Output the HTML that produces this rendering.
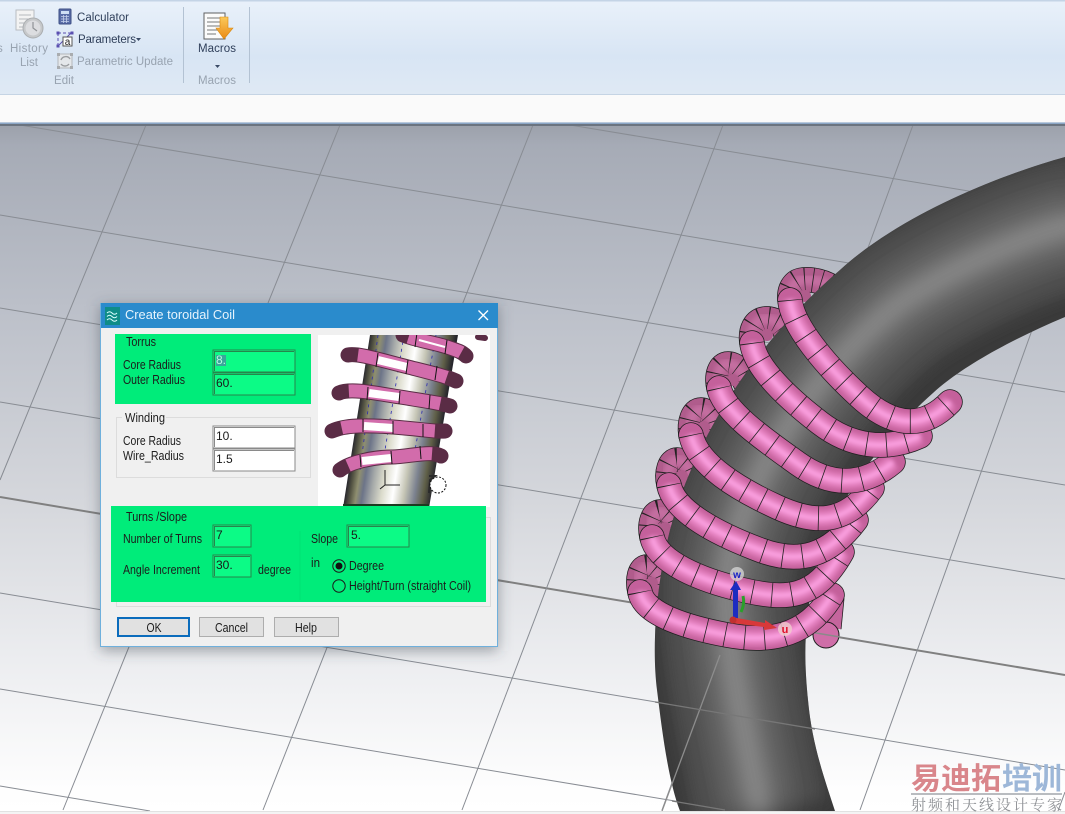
<!DOCTYPE html>
<html><head><meta charset="utf-8"><style>
html,body{margin:0;padding:0;background:#fff;width:1065px;height:814px;overflow:hidden}
svg{display:block;font-family:"Liberation Sans","Noto Sans CJK SC",sans-serif}
.g line{stroke:#888c93;stroke-width:1}
.o{fill:none;stroke:#1c1c1c;stroke-width:25.5;stroke-linecap:round}
.b{fill:none;stroke:#c4609b;stroke-width:24;stroke-linecap:round}
.m{fill:none;stroke:#e07cba;stroke-width:16;filter:url(#b2)}
.h{fill:none;stroke:#ffa6e6;stroke-width:5;filter:url(#b2)}
.d{fill:none;stroke:#222;stroke-width:24.5;stroke-dasharray:.8 19}
.bk{fill:none;stroke:#b05c8c;stroke-width:24;stroke-linecap:round}
.bm{fill:none;stroke:#c46ea0;stroke-width:10;filter:url(#b2)}
.bd{fill:none;stroke:#222;stroke-width:24;stroke-dasharray:.8 7.5}
.t{font-size:12.5px;fill:#1c1c1c}
.r{font-size:11.5px;fill:#2f3f5a}
.rg{font-size:11.5px;fill:#98a3b0}
.ig{fill:#0cfb86;stroke:#26864c;stroke-width:1}
.iw{fill:#fff;stroke:#8a8a8a;stroke-width:1}
.ri{fill:none;stroke:#1a1a1a;stroke-width:1}
.p1{fill:none;stroke:#5a2c45;stroke-width:15;stroke-linecap:round}
.p2{fill:none;stroke:#d26cab;stroke-width:13;stroke-dasharray:0 9 82 100}
.p3{fill:none;stroke:#fff;stroke-width:8}
</style></head><body>
<svg width="1065" height="814" viewBox="0 0 1065 814" xmlns="http://www.w3.org/2000/svg">
<defs>
<linearGradient id="bg" x1="0" y1="125" x2="0" y2="811" gradientUnits="userSpaceOnUse">
<stop offset="0" stop-color="#9ca1ab"/><stop offset=".03" stop-color="#a6abb6"/><stop offset=".28" stop-color="#bdc1ca"/><stop offset=".55" stop-color="#d5d7dc"/><stop offset=".77" stop-color="#ebecef"/><stop offset=".97" stop-color="#fefefe"/><stop offset="1" stop-color="#fff"/>
</linearGradient>
<linearGradient id="rib" x1="0" y1="0" x2="0" y2="94" gradientUnits="userSpaceOnUse">
<stop offset="0" stop-color="#e9f1fa"/><stop offset=".6" stop-color="#d8e5f4"/><stop offset="1" stop-color="#dfe9f4"/>
</linearGradient>
<linearGradient id="cyl" x1="343" y1="508" x2="428" y2="521" gradientUnits="userSpaceOnUse">
<stop offset="0" stop-color="#26262c"/><stop offset=".06" stop-color="#555544"/><stop offset=".13" stop-color="#8f8f70"/><stop offset=".2" stop-color="#6c7488"/><stop offset=".3" stop-color="#a4a8a8"/><stop offset=".42" stop-color="#dcdccc"/><stop offset=".55" stop-color="#ffffff"/><stop offset=".68" stop-color="#c4c4b4"/><stop offset=".8" stop-color="#7c8290"/><stop offset=".9" stop-color="#606048"/><stop offset="1" stop-color="#26262c"/>
</linearGradient>
<linearGradient id="arrow" x1="0" y1="0" x2="0" y2="1"><stop offset="0" stop-color="#fbc95a"/><stop offset="1" stop-color="#ea8a16"/></linearGradient>
<filter id="b2" x="-20%" y="-20%" width="140%" height="140%"><feGaussianBlur stdDeviation="2.4"/></filter>
<filter id="b5" x="-30%" y="-30%" width="160%" height="160%"><feGaussianBlur stdDeviation="9"/></filter>
<filter id="b8" x="-30%" y="-30%" width="160%" height="160%"><feGaussianBlur stdDeviation="7"/></filter>
<filter id="b14" x="-30%" y="-30%" width="160%" height="160%"><feGaussianBlur stdDeviation="13"/></filter>
<clipPath id="tc"><path d="M1065,157 C1000,175 900,215 840,270 C770,330 700,420 670,530 C655,590 652,650 657,690 C662,730 668,780 680,811 L835,811 C825,780 812,745 808,700 C803,650 805,620 815,570 C830,510 880,440 933,393 C960,368 1010,340 1065,317 Z"/></clipPath>
<clipPath id="ic"><rect x="318" y="335" width="172" height="172"/></clipPath>
<path id="t1" d="M790,300 C792,325 825,365 860,397 S925,428 950,402"/>
<path id="t2" d="M752,343 C755,368 790,400 820,423 S885,452 920,436"/>
<path id="t3" d="M719,388 C724,412 765,440 797,463 S862,488 893,462"/>
<path id="t4" d="M691,435 C697,465 740,490 777,507 S845,525 872,488"/>
<path id="t5" d="M669,485 C674,512 720,535 760,550 S830,555 856,520"/>
<path id="t6" d="M652,537 C657,562 700,580 743,590 S815,600 842,552"/>
<path id="t7" d="M640,592 C644,615 690,628 727,635 S805,640 832,595"/>
<path id="k1" d="M836,290 C826,281 810,279 803,280 C793,281 789,290 790,300"/>
<path id="k2" d="M786,335 C785,322 770,318 765,319 C755,320 750,330 752,343"/>
<path id="k3" d="M745,382 C745,372 735,364 728,364 C720,364 716,375 719,388"/>
<path id="k4" d="M715,430 C715,418 707,410 701,410 C693,410 689,422 691,435"/>
<path id="k5" d="M691,478 C691,468 683,460 677,460 C670,460 666,472 669,485"/>
<path id="k6" d="M673,530 C673,520 665,512 660,512 C653,512 649,524 652,537"/>
<path id="k7" d="M661,585 C661,575 653,567 647,567 C640,567 637,579 640,592"/>
</defs>

<!-- viewport background -->
<rect x="0" y="125" width="1065" height="686" fill="url(#bg)"/>
<g class="g">
<line x1="20" y1="125" x2="1065" y2="299"/>
<line x1="570" y1="125" x2="1065" y2="207"/>
<line x1="0" y1="215" x2="1065" y2="392"/>
<line x1="0" y1="308" x2="1065" y2="485"/>
<line x1="0" y1="402" x2="1065" y2="579"/>
<line x1="0" y1="497" x2="1065" y2="675" style="stroke-width:2;stroke:#808080"/>
<line x1="0" y1="593" x2="1065" y2="770"/>
<line x1="0" y1="689" x2="735" y2="811"/>
<line x1="0" y1="786" x2="150" y2="811"/>
<line x1="146" y1="125" x2="0" y2="480"/>
<line x1="340" y1="125" x2="63" y2="810"/>
<line x1="533" y1="125" x2="263" y2="810"/>
<line x1="723" y1="125" x2="462" y2="810"/>
<line x1="913" y1="125" x2="662" y2="810"/>
<line x1="1065" y1="238" x2="860" y2="810"/>
<line x1="1065" y1="792" x2="1058" y2="811"/>
</g>

<!-- back loops -->
<g>
<use href="#k7" class="o"/><use href="#k7" class="bk"/><use href="#k7" class="bm"/><use href="#k7" class="bd"/>
<use href="#k6" class="o"/><use href="#k6" class="bk"/><use href="#k6" class="bm"/><use href="#k6" class="bd"/>
<use href="#k5" class="o"/><use href="#k5" class="bk"/><use href="#k5" class="bm"/><use href="#k5" class="bd"/>
<use href="#k4" class="o"/><use href="#k4" class="bk"/><use href="#k4" class="bm"/><use href="#k4" class="bd"/>
<use href="#k3" class="o"/><use href="#k3" class="bk"/><use href="#k3" class="bm"/><use href="#k3" class="bd"/>
<use href="#k2" class="o"/><use href="#k2" class="bk"/><use href="#k2" class="bm"/><use href="#k2" class="bd"/>
<use href="#k1" class="o"/><use href="#k1" class="bk"/><use href="#k1" class="bm"/><use href="#k1" class="bd"/>
<g fill="#b05c8c">
<circle cx="805" cy="296" r="6"/><circle cx="767" cy="335" r="6"/><circle cx="733" cy="380" r="6"/><circle cx="704" cy="427" r="6"/><circle cx="682" cy="476" r="6"/><circle cx="665" cy="528" r="6"/><circle cx="652" cy="583" r="6"/>
</g>
</g>

<!-- tube -->
<g clip-path="url(#tc)">
<rect x="640" y="150" width="425" height="661" fill="#3a3a3a"/>
<path d="M1085,222 C1030,232 950,270 900,303 C820,365 745,470 728,570 C722,640 745,730 760,811" fill="none" stroke="#484848" stroke-width="135" filter="url(#b8)"/>
<path d="M1085,222 C1030,232 950,270 900,303 C820,365 745,470 728,570 C722,640 745,730 760,811" fill="none" stroke="#5c5c5c" stroke-width="88" filter="url(#b14)"/>
<path d="M1085,222 C1030,232 950,270 900,303 C820,365 745,470 728,570 C722,640 745,730 760,811" fill="none" stroke="#737373" stroke-width="42" filter="url(#b14)"/>
<path d="M1085,222 C1030,232 950,270 900,303 C820,365 745,470 728,570 C722,640 745,730 760,811" fill="none" stroke="#8e8e8e" stroke-width="14" filter="url(#b5)"/>
</g>
<g stroke="#8d8d8d" stroke-width="1.3" fill="none">
<line x1="720" y1="655" x2="662" y2="811"/>
<line x1="655" y1="702" x2="815" y2="729" stroke="#777"/>
<line x1="672" y1="801" x2="725" y2="810" stroke="#777"/>
</g>

<!-- coil -->
<path d="M832,597 L829,628" fill="none" stroke="#1c1c1c" stroke-width="25"/>
<path d="M832,597 L829,628" fill="none" stroke="#c5659d" stroke-width="23.5"/>
<circle cx="826" cy="635" r="13" fill="#cf6ea8" stroke="#1c1c1c"/>
<line x1="810" y1="632" x2="840" y2="637" stroke="#8a8a8a" stroke-width="1.5"/>
<g><use href="#t7" class="o"/><use href="#t7" class="b"/><use href="#t7" class="m"/><use href="#t7" class="h"/><use href="#t7" class="d"/></g>
<g><use href="#t6" class="o"/><use href="#t6" class="b"/><use href="#t6" class="m"/><use href="#t6" class="h"/><use href="#t6" class="d"/></g>
<g><use href="#t5" class="o"/><use href="#t5" class="b"/><use href="#t5" class="m"/><use href="#t5" class="h"/><use href="#t5" class="d"/></g>
<g><use href="#t4" class="o"/><use href="#t4" class="b"/><use href="#t4" class="m"/><use href="#t4" class="h"/><use href="#t4" class="d"/></g>
<g><use href="#t3" class="o"/><use href="#t3" class="b"/><use href="#t3" class="m"/><use href="#t3" class="h"/><use href="#t3" class="d"/></g>
<g><use href="#t2" class="o"/><use href="#t2" class="b"/><use href="#t2" class="m"/><use href="#t2" class="h"/><use href="#t2" class="d"/></g>
<g><use href="#t1" class="o"/><use href="#t1" class="b"/><use href="#t1" class="m"/><use href="#t1" class="h"/><use href="#t1" class="d"/></g>

<!-- gizmo -->
<circle cx="737" cy="574" r="7" fill="#d8d8d8" fill-opacity=".75"/>
<text x="737" y="578" font-size="10" font-weight="bold" fill="#1a22c8" text-anchor="middle">w</text>
<path d="M741,612 Q745,604 743,596" stroke="#2aa02a" stroke-width="3" fill="none"/>
<path d="M733,620 L733,590 L730,590 L736,581 L741,590 L738,590 L738,620 Z" fill="#1c2cc0"/>
<path d="M731,617 L765,623 L765,620 L777,628 L764,630 L764,627 L731,623 Z" fill="#d8383a"/>
<circle cx="733" cy="620" r="3.5" fill="#c03030"/>
<circle cx="785" cy="629" r="7" fill="#f0c8cc" fill-opacity=".85"/>
<text x="785" y="633" font-size="11" font-weight="bold" fill="#e0102a" text-anchor="middle">u</text>

<!-- bottom strip -->
<rect x="0" y="811" width="1065" height="3" fill="#f4f4f4"/>
<line x1="0" y1="811.5" x2="1065" y2="811.5" stroke="#e2e2e2"/>

<!-- watermark -->
<text x="911" y="789" font-size="30" font-weight="bold" fill="#d9868b" textLength="90" font-family="'Noto Sans CJK SC',sans-serif">易迪拓</text>
<text x="1002" y="789" font-size="30" font-weight="bold" fill="#9db7d8" textLength="60" font-family="'Noto Sans CJK SC',sans-serif">培训</text>
<rect x="911" y="793" width="151" height="2" fill="#b9bcc0"/>
<text x="911" y="810" font-size="15" fill="#8f9296" textLength="151" font-family="'Noto Serif CJK SC',serif">射频和天线设计专家</text>

<!-- ribbon -->
<rect x="0" y="0" width="1065" height="95" fill="url(#rib)"/>
<rect x="0" y="0" width="1065" height="1.5" fill="#c4d4e6"/>
<rect x="0" y="94" width="1065" height="1" fill="#c5d4e4"/>
<rect x="0" y="95" width="1065" height="27" fill="#fafafa"/>
<rect x="0" y="122" width="1065" height="1" fill="#b9c9dc"/>
<rect x="0" y="123" width="1065" height="1" fill="#8ba6c6"/>
<rect x="0" y="124" width="1065" height="2" fill="#6b7480"/>
<rect x="183" y="7" width="1" height="76" fill="#b3c2d3"/>
<rect x="249" y="7" width="1" height="76" fill="#b3c2d3"/>

<!-- history icon -->
<path d="M16,10 H34 V30 H16 Z" fill="#f3f3f3" stroke="#b8bcc2"/>
<path d="M19,15 H31 M19,19 H28 M19,23 H26 M19,27 H24" stroke="#b4b8be"/>
<circle cx="33" cy="28" r="10" fill="#c6c8ca" stroke="#aaadb0"/>
<circle cx="33" cy="28" r="7.5" fill="#dcdde0"/>
<path d="M33,22 V28 L37,31" stroke="#8f9296" stroke-width="1.2" fill="none"/>
<text x="-3" y="52" class="rg" textLength="6">s</text>
<text x="10" y="52" class="rg" textLength="38">History</text>
<text x="20" y="66" class="rg" textLength="18">List</text>

<!-- calculator -->
<rect x="59" y="9" width="12" height="15" rx="1" fill="#5a6ea8" stroke="#3d4f85"/>
<rect x="61" y="11" width="8" height="3" fill="#cfe0f5"/>
<path d="M61,16.5 H69 M61,19 H69 M61,21.5 H69 M63.5,15 V23 M66.5,15 V23" stroke="#c3d0ea" stroke-width=".8"/>
<text x="77" y="21" class="r" textLength="52">Calculator</text>

<!-- parameters -->
<path d="M58,46 L72,32" stroke="#5a4fb0"/>
<path d="M58,33 H71 M58,33 V46" stroke="#5a4fb0" stroke-dasharray="3 2" fill="none"/>
<rect x="56.5" y="31.5" width="3" height="3" fill="#5a4fb0"/><rect x="70.5" y="31.5" width="3" height="3" fill="#5a4fb0"/><rect x="56.5" y="44.5" width="3" height="3" fill="#5a4fb0"/>
<rect x="63" y="37" width="9" height="9" fill="#fff" stroke="#555"/>
<text x="64.8" y="45" font-size="10" fill="#222">a</text>
<text x="78" y="43" class="r" textLength="58">Parameters</text>
<path d="M136,38 H141 L138.5,41 Z" fill="#3a4a66"/>

<!-- parametric update -->
<rect x="58" y="54" width="14" height="14" fill="#e4e7ea" stroke="#b4b7ba"/>
<rect x="57" y="53" width="3" height="3" fill="#a9acaf"/><rect x="70" y="53" width="3" height="3" fill="#a9acaf"/><rect x="57" y="66" width="3" height="3" fill="#a9acaf"/><rect x="70" y="66" width="3" height="3" fill="#a9acaf"/>
<path d="M61,60 A5,5 0 0 1 70,59 M69,64 A5,5 0 0 1 61,64" stroke="#9a9da0" stroke-width="1.4" fill="none"/>
<text x="77" y="65" class="rg" textLength="96">Parametric Update</text>
<text x="54" y="84" class="rg" textLength="20">Edit</text>

<!-- macros -->
<rect x="204" y="13" width="21" height="26" fill="#fbfbfb" stroke="#5f6062"/>
<path d="M207,18 H222 M207,22 H222 M207,26 H220 M207,30 H218 M207,34 H216" stroke="#77787a"/>
<path d="M220,17 H228 V28 H233 L224,39 L216,28 H220 Z" fill="url(#arrow)" stroke="#d9890f" stroke-width=".6"/>
<text x="198" y="52" class="r" textLength="38">Macros</text>
<path d="M215,65 H220 L217.5,68 Z" fill="#3a4a66"/>
<text x="198" y="84" class="rg" textLength="38">Macros</text>

<!-- dialog -->
<rect x="100" y="306" width="398" height="345" fill="#3c4450" fill-opacity=".45" filter="url(#b8)"/>
<rect x="100.5" y="303.5" width="397" height="343" fill="#f0f0f0" stroke="#6fb0dc"/>
<rect x="101" y="303" width="397" height="25" fill="#2a8bcc"/>
<rect x="105" y="307" width="15" height="18" fill="#0f8d88"/>
<path d="M107,313 q2.5,-2.5 5,0 t5,0 M107,316.5 q2.5,-2.5 5,0 t5,0 M107,320 q2.5,-2.5 5,0 t5,0" stroke="#dff" fill="none"/>
<text x="125" y="319" font-size="13" fill="#e6f3fc" textLength="110" lengthAdjust="spacingAndGlyphs">Create toroidal Coil</text>
<path d="M478.5,310.5 L488,320 M488,310.5 L478.5,320" stroke="#fff" stroke-width="1.3"/>

<!-- inset image -->
<rect x="318" y="335" width="172" height="172" fill="#fff"/>
<g clip-path="url(#ic)">
<polygon points="370,335 458,335 429,508 343,508" fill="url(#cyl)"/>
<path d="M378,335 L360,470 M404,335 L385,450 M436,335 L415,450" stroke="#2a2ab0" stroke-width=".8" stroke-dasharray="3 4" fill="none"/>
<rect x="343" y="504" width="86" height="4" fill="#1c3a20"/>
<path d="M403,335 C415,340 435,343 447,347 S462,352 466,356" class="p1"/>
<path pathLength="100" d="M403,335 C415,340 435,343 447,347 S462,352 466,356" class="p2"/>
<path d="M419,340 L445,347" class="p3" style="stroke-width:2"/>
<path d="M478,337 L485,338" stroke="#5a2c45" stroke-width="6" stroke-linecap="round"/>
<path d="M348,355 C358,353 380,360 408,367 S445,376 456,381" class="p1"/>
<path pathLength="100" d="M348,355 C358,353 380,360 408,367 S445,376 456,381" class="p2"/>
<path d="M378,360 L407,367" class="p3"/>
<path d="M339,393 C350,388 375,393 400,397 S440,403 450,406" class="p1"/>
<path pathLength="100" d="M339,393 C350,388 375,393 400,397 S440,403 450,406" class="p2"/>
<path d="M369,393 L399,397" class="p3"/>
<path d="M332,431 C345,425 365,425 393,427 S435,432 445,431" class="p1"/>
<path pathLength="100" d="M332,431 C345,425 365,425 393,427 S435,432 445,431" class="p2"/>
<path d="M364,426 L393,428" class="p3"/>
<path d="M340,470 C350,462 375,457 392,457 S430,450 441,456" class="p1"/>
<path pathLength="100" d="M340,470 C350,462 375,457 392,457 S430,450 441,456" class="p2"/>
<path d="M362,461 L391,458" class="p3"/>
<path d="M360,455 L361,467 M391,451 L392,464 M420,446 L421,459 M363,419 L363,432 M393,421 L393,434 M423,424 L423,437 M368,387 L367,400 M400,391 L399,404 M430,395 L429,409 M378,353 L376,367 M408,360 L406,374 M437,366 L435,380 M417,333 L415,347 M447,340 L445,354" stroke="#151515" fill="none"/>
<path d="M385,470 V485 M385,485 H400 M385,485 L380,489" stroke="#222" fill="none"/>
<path d="M429,476 L435,476 L430,480 L429,493" stroke="#2a2a2a" stroke-width="2" fill="none"/>
<circle cx="438" cy="485" r="8" fill="#fff" stroke="#111" stroke-dasharray="2 1.5"/>
</g>

<!-- torrus -->
<rect x="115" y="334" width="196" height="70" fill="#00ec7a"/>
<text x="126" y="346" class="t" textLength="30" lengthAdjust="spacingAndGlyphs">Torrus</text>
<text x="123" y="369" class="t" textLength="58" lengthAdjust="spacingAndGlyphs">Core Radius</text>
<text x="123" y="384" class="t" textLength="62" lengthAdjust="spacingAndGlyphs">Outer Radius</text>
<rect x="213" y="350" width="82" height="22" class="ig"/><path d="M214.5,371 V351.5 H294" fill="none" stroke="#26864c"/>
<rect x="213" y="373" width="82" height="22" class="ig"/><path d="M214.5,394 V374.5 H294" fill="none" stroke="#26864c"/>
<rect x="216" y="355" width="10" height="11" fill="#3aa59a"/>
<text x="216" y="364" font-size="12" fill="#b8fbe0">8.</text>
<text x="216" y="387" font-size="12" fill="#1a1a1a">60.</text>

<!-- winding -->
<rect x="116.5" y="417.5" width="194" height="60" fill="none" stroke="#dcdcdc"/>
<rect x="122" y="412" width="44" height="10" fill="#f0f0f0"/>
<text x="125" y="422" class="t" textLength="40" lengthAdjust="spacingAndGlyphs">Winding</text>
<text x="123" y="445" class="t" textLength="58" lengthAdjust="spacingAndGlyphs">Core Radius</text>
<text x="123" y="460" class="t" textLength="61" lengthAdjust="spacingAndGlyphs">Wire_Radius</text>
<rect x="213" y="426" width="82" height="22" class="iw"/><path d="M214.5,447 V427.5 H294" fill="none" stroke="#8a8a8a"/>
<rect x="213" y="449" width="82" height="22" class="iw"/><path d="M214.5,470 V450.5 H294" fill="none" stroke="#8a8a8a"/>
<text x="216" y="440" font-size="12" fill="#1a1a1a">10.</text>
<text x="216" y="463" font-size="12" fill="#1a1a1a">1.5</text>

<!-- turns/slope -->
<rect x="116.5" y="517.5" width="374" height="89" fill="none" stroke="#dcdcdc"/>
<rect x="111" y="506" width="375" height="96" fill="#00ec7a"/>
<line x1="300" y1="531" x2="300" y2="600" stroke="#00e274"/>
<text x="126" y="521" class="t" textLength="61" lengthAdjust="spacingAndGlyphs">Turns /Slope</text>
<text x="123" y="543" class="t" textLength="79" lengthAdjust="spacingAndGlyphs">Number of Turns</text>
<text x="123" y="574" class="t" textLength="77" lengthAdjust="spacingAndGlyphs">Angle Increment</text>
<text x="258" y="574" class="t" textLength="33" lengthAdjust="spacingAndGlyphs">degree</text>
<text x="311" y="543" class="t" textLength="27" lengthAdjust="spacingAndGlyphs">Slope</text>
<text x="311" y="567" class="t" textLength="9" lengthAdjust="spacingAndGlyphs">in</text>
<text x="349" y="570" class="t" textLength="35" lengthAdjust="spacingAndGlyphs">Degree</text>
<text x="349" y="590" class="t" textLength="122" lengthAdjust="spacingAndGlyphs">Height/Turn (straight Coil)</text>
<rect x="213" y="525" width="38" height="22" class="ig"/><path d="M214.5,546 V526.5 H250" fill="none" stroke="#26864c"/>
<rect x="213" y="555" width="38" height="22" class="ig"/><path d="M214.5,576 V556.5 H250" fill="none" stroke="#26864c"/>
<rect x="347" y="525" width="62" height="22" class="ig"/><path d="M348.5,546 V526.5 H408" fill="none" stroke="#26864c"/>
<text x="216" y="539" font-size="12" fill="#1a1a1a">7</text>
<text x="216" y="569" font-size="12" fill="#1a1a1a">30.</text>
<text x="351" y="539" font-size="12" fill="#1a1a1a">5.</text>
<circle cx="339" cy="566" r="6.2" class="ri"/><circle cx="339" cy="566" r="3.5" fill="#111"/>
<circle cx="339" cy="586" r="6.2" class="ri"/>

<!-- buttons -->
<rect x="118" y="618" width="71" height="18" fill="#e1e1e1" stroke="#0b6cbc" stroke-width="2"/>
<rect x="199.5" y="617.5" width="64" height="19" fill="#e1e1e1" stroke="#adadad"/>
<rect x="274.5" y="617.5" width="64" height="19" fill="#e1e1e1" stroke="#adadad"/>
<text x="146.5" y="632" class="t" textLength="15" lengthAdjust="spacingAndGlyphs">OK</text>
<text x="215" y="632" class="t" textLength="33" lengthAdjust="spacingAndGlyphs">Cancel</text>
<text x="295" y="632" class="t" textLength="22" lengthAdjust="spacingAndGlyphs">Help</text>
</svg>
</body></html>
